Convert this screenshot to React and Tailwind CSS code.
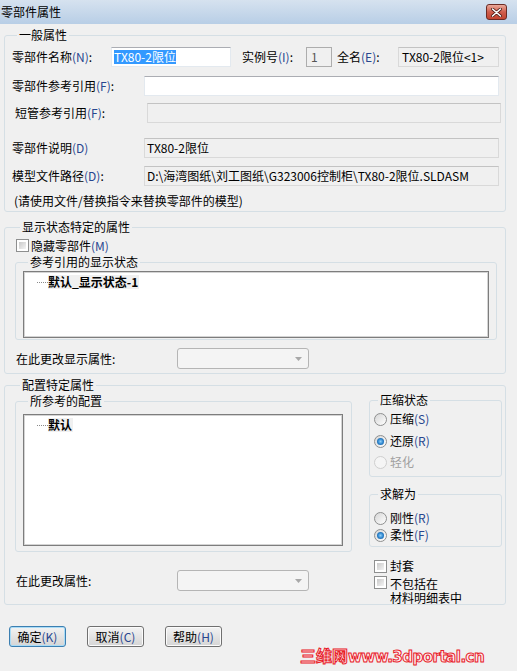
import React from 'react';

const M = ({ children }) => <span className="text-[#27468f]">{children}</span>;

const GroupBox = ({ label, className = '', legendClass = 'ml-[5px]', children }) => (
    <fieldset className={`border border-[#d5dfe5] rounded-[3px] ${className}`}>
        <legend className={`${legendClass} px-[2px] leading-[14px]`}>{label}</legend>
        {children}
    </fieldset>
);

const Box = ({ className = '', children, disabled }) => (
    <div
        className={`h-[20px] flex items-center pl-[2px] whitespace-nowrap overflow-hidden border ${disabled
            ? 'bg-[#f0f0f0] border-[#d9d9d9] border-t-[#c3c3c3]'
            : 'bg-white border-[#e3e9ef] border-t-[#abadb3]'
            } ${className}`}
    >
        {children}
    </div>
);

const Radio = ({ checked, disabled }) => (
    <span
        className={`w-[13px] h-[13px] rounded-full border flex items-center justify-center shrink-0 ${disabled
            ? 'border-[#cfcfcf] bg-[#f5f5f5]'
            : 'border-[#8e8f8f] bg-linear-to-br from-[#d6d6d6] to-[#ffffff]'
            }`}
    >
        {checked && <span className="w-[7px] h-[7px] rounded-full bg-radial from-[#8fd0f7] via-[#2e86cf] to-[#0b4f8c]" />}
    </span>
);

const Check = () => (
    <span className="w-[13px] h-[13px] border border-[#8e8f8f] bg-white p-[2px] shrink-0 flex">
        <span className="flex-1 bg-linear-to-br from-[#c9c9c9] to-[#f4f4f4]" />
    </span>
);

const Combo = () => (
    <div className="w-[132px] h-[21px] rounded-[3px] border border-[#b5b5b5] bg-[#f4f4f4] flex items-center justify-end pr-[6px]">
        <svg width="7" height="4" viewBox="0 0 7 4">
            <path d="M0 0h7L3.5 4z" fill="#a8a8a8" />
        </svg>
    </div>
);

const ListBox = ({ className = '', children }) => (
    <div className={`border border-[#7d7d7d] bg-white shadow-[inset_0_0_0_1px_#d4d4d4] pt-[3px] ${className}`}>
        {children}
    </div>
);

const TreeItem = ({ text }) => (
    <div className="flex items-center h-[14px] pl-[13px]">
        <span className="w-[11px] border-t border-dotted border-[#8a8a8a]" />
        <span className="bg-[#f0f0f0] font-bold leading-[14px] pr-[1px]">{text}</span>
    </div>
);

const Button = ({ children, primary }) => (
    <button
        className={`w-[57px] h-[21px] rounded-[3px] border flex items-center justify-center leading-none bg-linear-to-b from-[#f3f3f3] to-[#d5d5d5] ${primary
            ? 'border-[#3c7fb1] shadow-[inset_0_0_0_1px_#a9dcf7]'
            : 'border-[#707070] shadow-[inset_0_0_0_1px_#fbfbfb]'
            }`}
    >
        {children}
    </button>
);

export default function App() {
    return (
        <div className="w-[517px] h-[671px] bg-[#f0f0f0] relative overflow-hidden text-[12px] text-black font-['Noto_Sans_CJK_SC','Noto_Sans',sans-serif]">
            {/* Title bar */}
            <div className="h-[24px] flex items-center justify-between pl-[1px] pr-[10px] bg-linear-to-b from-[#d6e2ef] to-[#b8cee6]">
                <span className="text-[12px] leading-none">零部件属性</span>
                <div className="w-[21px] h-[16px] rounded-[3px] border border-[#6b2b24] bg-linear-to-b from-[#e9a99b] via-[#cf5d4c] to-[#c24531] flex items-center justify-center">
                    <svg width="11" height="9" viewBox="0 0 11 9">
                        <path d="M1.5 1l8 7M9.5 1l-8 7" stroke="#4a1a14" strokeWidth="3" strokeLinecap="round" />
                        <path d="M1.5 1l8 7M9.5 1l-8 7" stroke="#fff" strokeWidth="1.6" strokeLinecap="round" />
                    </svg>
                </div>
            </div>

            <div className="px-[4px] pt-[4px]">
                {/* 一般属性 */}
                <GroupBox label="一般属性" className="w-[502px] pl-[7px] pb-[3px]">
                    <div className="mt-[5px] flex items-center h-[20px]">
                        <span className="w-[99px]">零部件名称<M>(N)</M>:</span>
                        <Box className="w-[120px]">
                            <span className="bg-[#3399ff] text-white leading-[14px]">TX80-2限位</span>
                        </Box>
                        <span className="ml-[11px] w-[64px]">实例号<M>(I)</M>:</span>
                        <div className="w-[26px] h-[20px] border border-[#adadad] bg-[#f0f0f0] pl-[4px] flex items-center text-[#555]">1</div>
                        <span className="ml-[5px] w-[61px]">全名<M>(E)</M>:</span>
                        <Box disabled className="w-[101px] pl-[3px]">TX80-2限位&lt;1&gt;</Box>
                    </div>
                    <div className="mt-[9px] flex items-center h-[20px]">
                        <span className="w-[132px]">零部件参考引用<M>(F)</M>:</span>
                        <Box className="w-[355px]" />
                    </div>
                    <div className="mt-[7px] flex items-center h-[20px] pl-[3px]">
                        <span className="w-[132px]">短管参考引用<M>(F)</M>:</span>
                        <Box disabled className="w-[354px]" />
                    </div>
                    <div className="mt-[15px] flex items-center h-[20px]">
                        <span className="w-[132px]">零部件说明<M>(D)</M></span>
                        <Box disabled className="w-[355px]">TX80-2限位</Box>
                    </div>
                    <div className="mt-[8px] flex items-center h-[20px]">
                        <span className="w-[132px]">模型文件路径<M>(D)</M>:</span>
                        <Box disabled className="w-[355px]">D:\海湾图纸\刘工图纸\G323006控制柜\TX80-2限位.SLDASM</Box>
                    </div>
                    <div className="mt-[8px] pl-[2px] leading-[14px]">(请使用文件/替换指令来替换零部件的模型)</div>
                </GroupBox>

                {/* 显示状态特定的属性 */}
                <GroupBox label="显示状态特定的属性" className="mt-[8px] w-[502px] pl-[10px] pb-[4px]">
                    <div className="mt-[5px] ml-[1px] h-[13px] flex items-center gap-[2px]">
                        <Check />
                        <span className="leading-[14px]">隐藏零部件<M>(M)</M></span>
                    </div>
                    <GroupBox label="参考引用的显示状态" className="mt-[3px] w-[482px] pl-[7px] pb-[1px]">
                        <ListBox className="mt-[2px] w-[466px] h-[67px]">
                            <TreeItem text="默认_显示状态-1" />
                        </ListBox>
                    </GroupBox>
                    <div className="mt-[8px] pl-[1px] h-[21px] flex items-center">
                        <span className="w-[161px]">在此更改显示属性:</span>
                        <Combo />
                    </div>
                </GroupBox>

                {/* 配置特定属性 */}
                <GroupBox label="配置特定属性" className="mt-[4px] w-[502px] pl-[10px] pb-[1px]">
                    <div className="flex h-[211px]">
                        <div className="w-[337px]">
                            <GroupBox label="所参考的配置" className="mt-[2px] w-[337px] pl-[7px] pb-[5px]">
                                <ListBox className="mt-[6px] w-[320px] h-[132px]">
                                    <TreeItem text="默认" />
                                </ListBox>
                            </GroupBox>
                            <div className="mt-[18px] pl-[1px] h-[21px] flex items-center">
                                <span className="w-[161px]">在此更改属性:</span>
                                <Combo />
                            </div>
                        </div>
                        <div className="ml-[17px] w-[133px]">
                            <GroupBox label="压缩状态" legendClass="ml-[4px]" className="mt-[1px] w-[133px] pl-[4px] pb-[6px]">
                                <div className="mt-[4px] h-[16px] flex items-center gap-[3px]">
                                    <Radio />
                                    <span>压缩<M>(S)</M></span>
                                </div>
                                <div className="mt-[6px] h-[16px] flex items-center gap-[3px]">
                                    <Radio checked />
                                    <span>还原<M>(R)</M></span>
                                </div>
                                <div className="mt-[5px] h-[16px] flex items-center gap-[3px] text-[#a0a0a0]">
                                    <Radio disabled />
                                    <span>轻化</span>
                                </div>
                            </GroupBox>
                            <GroupBox label="求解为" legendClass="ml-[4px]" className="mt-[10px] w-[133px] pl-[4px] pb-[3px]">
                                <div className="mt-[9px] h-[16px] flex items-center gap-[3px]">
                                    <Radio />
                                    <span>刚性<M>(R)</M></span>
                                </div>
                                <div className="mt-[1px] h-[16px] flex items-center gap-[3px]">
                                    <Radio checked />
                                    <span>柔性<M>(F)</M></span>
                                </div>
                            </GroupBox>
                            <div className="mt-[11px] pl-[5px] h-[16px] flex items-center gap-[3px]">
                                <Check />
                                <span>封套</span>
                            </div>
                            <div className="mt-[2px] pl-[5px] flex items-start gap-[3px]">
                                <Check />
                                <span className="leading-[14px] mt-[1px]">不包括在<br />材料明细表中</span>
                            </div>
                        </div>
                    </div>
                </GroupBox>

                <div className="mt-[21px] pl-[5px] flex gap-[21px]">
                    <Button primary>确定<M>(K)</M></Button>
                    <Button>取消<M>(C)</M></Button>
                    <Button>帮助<M>(H)</M></Button>
                </div>
            </div>

            {/* watermark */}
            <div className="absolute left-[300px] top-[646px] font-bold text-[#fff0f0] [-webkit-text-stroke:1px_#e8202a] leading-[18px] whitespace-nowrap">
                <span className="text-[16px] tracking-[0px]">三维网</span>
                <span className="text-[15px] font-['DejaVu_Sans',sans-serif] tracking-[-0.5px]">www.3dportal.cn</span>
            </div>
        </div>
    );
}
